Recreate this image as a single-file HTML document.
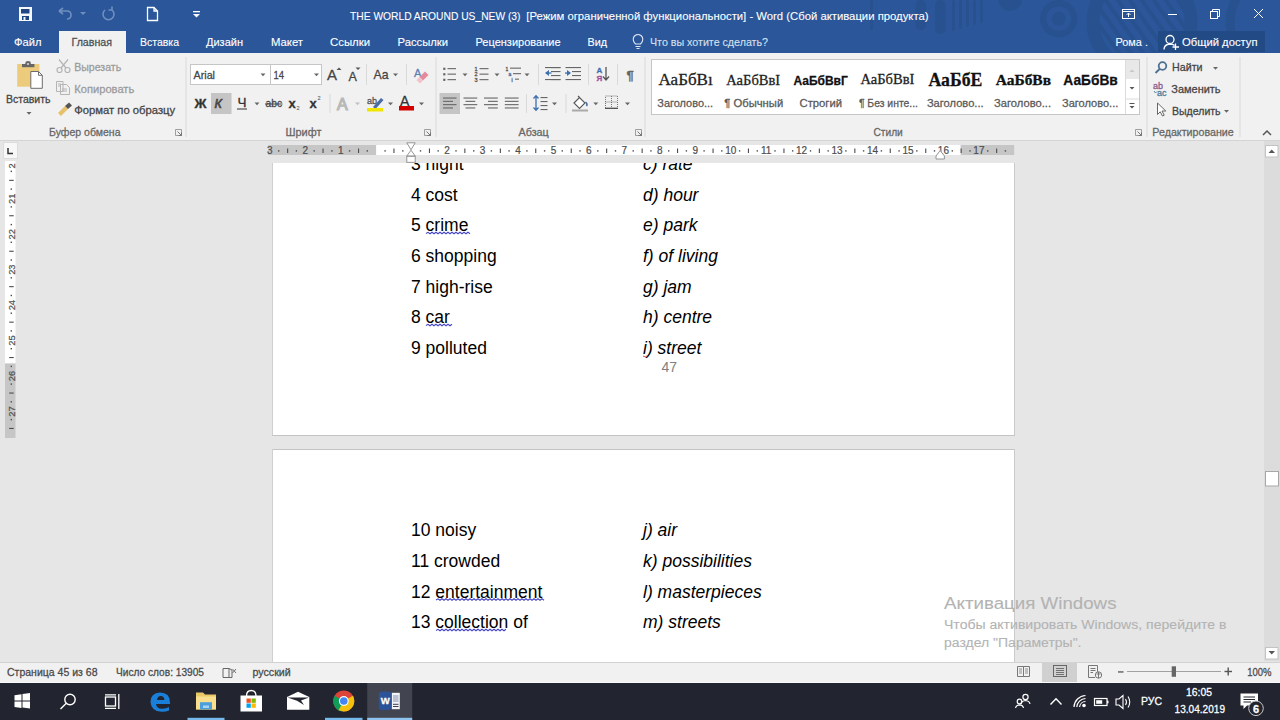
<!DOCTYPE html>
<html><head><meta charset="utf-8"><title>Word</title>
<style>
*{margin:0;padding:0}
html,body{width:1280px;height:720px;overflow:hidden;background:#e6e6e6;font-family:"Liberation Sans",sans-serif}
svg{position:absolute;left:0;top:0;display:block}
</style></head><body>
<svg width="1280" height="720" viewBox="0 0 1280 720">
<defs><clipPath id="vrclip" clipPathUnits="userSpaceOnUse"><rect x="0" y="163" width="40" height="300"/></clipPath><clipPath id="docclip"><rect x="0" y="163" width="1280" height="300"/></clipPath></defs>
<rect x="0" y="0" width="1280" height="720" fill="#e6e6e6" />
<rect x="1264" y="141" width="16" height="520" fill="#dedede" />
<rect x="273" y="100" width="741" height="335" fill="#ffffff" />
<rect x="272" y="100" width="1" height="336" fill="#d0d0d0" />
<rect x="1014" y="100" width="1" height="336" fill="#cacaca" />
<rect x="272" y="435" width="743" height="1" fill="#c4c4c4" />
<rect x="273" y="450" width="741" height="300" fill="#ffffff" />
<rect x="272" y="449" width="743" height="1" fill="#c4c4c4" />
<rect x="272" y="449" width="1" height="300" fill="#d0d0d0" />
<rect x="1014" y="449" width="1" height="300" fill="#cacaca" />
<g clip-path="url(#docclip)">
<text x="411" y="169.9" font-size="17.5" fill="#000" font-weight="normal" font-family="Liberation Sans" font-style="normal" text-anchor="start"  >3 night</text>
<text x="643" y="169.9" font-size="17.5" fill="#000" font-weight="normal" font-family="Liberation Sans" font-style="italic" text-anchor="start"  >c) rate</text>
<text x="411" y="200.6" font-size="17.5" fill="#000" font-weight="normal" font-family="Liberation Sans" font-style="normal" text-anchor="start"  >4 cost</text>
<text x="643" y="200.6" font-size="17.5" fill="#000" font-weight="normal" font-family="Liberation Sans" font-style="italic" text-anchor="start"  >d) hour</text>
<text x="411" y="231.3" font-size="17.5" fill="#000" font-weight="normal" font-family="Liberation Sans" font-style="normal" text-anchor="start"  >5 crime</text>
<text x="643" y="231.3" font-size="17.5" fill="#000" font-weight="normal" font-family="Liberation Sans" font-style="italic" text-anchor="start"  >e) park</text>
<text x="411" y="262.0" font-size="17.5" fill="#000" font-weight="normal" font-family="Liberation Sans" font-style="normal" text-anchor="start"  >6 shopping</text>
<text x="643" y="262.0" font-size="17.5" fill="#000" font-weight="normal" font-family="Liberation Sans" font-style="italic" text-anchor="start"  >f) of living</text>
<text x="411" y="292.7" font-size="17.5" fill="#000" font-weight="normal" font-family="Liberation Sans" font-style="normal" text-anchor="start"  >7 high-rise</text>
<text x="643" y="292.7" font-size="17.5" fill="#000" font-weight="normal" font-family="Liberation Sans" font-style="italic" text-anchor="start"  >g) jam</text>
<text x="411" y="323.4" font-size="17.5" fill="#000" font-weight="normal" font-family="Liberation Sans" font-style="normal" text-anchor="start"  >8 car</text>
<text x="643" y="323.4" font-size="17.5" fill="#000" font-weight="normal" font-family="Liberation Sans" font-style="italic" text-anchor="start"  >h) centre</text>
<text x="411" y="354.1" font-size="17.5" fill="#000" font-weight="normal" font-family="Liberation Sans" font-style="normal" text-anchor="start"  >9 polluted</text>
<text x="643" y="354.1" font-size="17.5" fill="#000" font-weight="normal" font-family="Liberation Sans" font-style="italic" text-anchor="start"  >i) street</text>
</g>
<text x="411" y="536.2" font-size="17.5" fill="#000" font-weight="normal" font-family="Liberation Sans" font-style="normal" text-anchor="start"  >10 noisy</text>
<text x="643" y="536.2" font-size="17.5" fill="#000" font-weight="normal" font-family="Liberation Sans" font-style="italic" text-anchor="start"  >j) air</text>
<text x="411" y="566.9" font-size="17.5" fill="#000" font-weight="normal" font-family="Liberation Sans" font-style="normal" text-anchor="start"  >11 crowded</text>
<text x="643" y="566.9" font-size="17.5" fill="#000" font-weight="normal" font-family="Liberation Sans" font-style="italic" text-anchor="start"  >k) possibilities</text>
<text x="411" y="597.6" font-size="17.5" fill="#000" font-weight="normal" font-family="Liberation Sans" font-style="normal" text-anchor="start"  >12 entertainment</text>
<text x="643" y="597.6" font-size="17.5" fill="#000" font-weight="normal" font-family="Liberation Sans" font-style="italic" text-anchor="start"  >l) masterpieces</text>
<text x="411" y="628.3" font-size="17.5" fill="#000" font-weight="normal" font-family="Liberation Sans" font-style="normal" text-anchor="start"  >13 collection of</text>
<text x="643" y="628.3" font-size="17.5" fill="#000" font-weight="normal" font-family="Liberation Sans" font-style="italic" text-anchor="start"  >m) streets</text>
<text x="661.5" y="372" font-size="14" fill="#808080" font-weight="normal" font-family="Liberation Sans" font-style="normal" text-anchor="start"  >47</text>
<path d="M426,233.5 L428,232.3 L430,233.8 L432,232.3 L434,233.8 L436,232.3 L438,233.8 L440,232.3 L442,233.8 L444,232.3 L446,233.8 L448,232.3 L450,233.8 L452,232.3 L454,233.8 L456,232.3 L458,233.8 L460,232.3 L462,233.8 L464,232.3 L466,233.8 L468,232.3 L470,233.8" fill="none" stroke="#4646c8" stroke-width="1.1"/>
<path d="M426,325.5 L428,324.3 L430,325.8 L432,324.3 L434,325.8 L436,324.3 L438,325.8 L440,324.3 L442,325.8 L444,324.3 L446,325.8 L448,324.3 L450,325.8 L452,324.3" fill="none" stroke="#4646c8" stroke-width="1.1"/>
<path d="M436,600 L438,598.8 L440,600.3 L442,598.8 L444,600.3 L446,598.8 L448,600.3 L450,598.8 L452,600.3 L454,598.8 L456,600.3 L458,598.8 L460,600.3 L462,598.8 L464,600.3 L466,598.8 L468,600.3 L470,598.8 L472,600.3 L474,598.8 L476,600.3 L478,598.8 L480,600.3 L482,598.8 L484,600.3 L486,598.8 L488,600.3 L490,598.8 L492,600.3 L494,598.8 L496,600.3 L498,598.8 L500,600.3 L502,598.8 L504,600.3 L506,598.8 L508,600.3 L510,598.8 L512,600.3 L514,598.8 L516,600.3 L518,598.8 L520,600.3 L522,598.8 L524,600.3 L526,598.8 L528,600.3 L530,598.8 L532,600.3 L534,598.8 L536,600.3 L538,598.8 L540,600.3 L542,598.8 L544,600.3" fill="none" stroke="#4646c8" stroke-width="1.1"/>
<path d="M436,630.5 L438,629.3 L440,630.8 L442,629.3 L444,630.8 L446,629.3 L448,630.8 L450,629.3 L452,630.8 L454,629.3 L456,630.8 L458,629.3 L460,630.8 L462,629.3 L464,630.8 L466,629.3 L468,630.8 L470,629.3 L472,630.8 L474,629.3 L476,630.8 L478,629.3 L480,630.8 L482,629.3 L484,630.8 L486,629.3 L488,630.8 L490,629.3 L492,630.8 L494,629.3 L496,630.8 L498,629.3 L500,630.8 L502,629.3 L504,630.8 L506,629.3" fill="none" stroke="#4646c8" stroke-width="1.1"/>
<path d="M643,356 Q645,358 648,355.5" fill="none" stroke="#d04040" stroke-width="0.9"/>
<rect x="0" y="0" width="1280" height="53" fill="#2b579a" />
<g fill="#28518f">
<rect x="870" y="0" width="3" height="30"/>
<rect x="915.5" y="0" width="10.5" height="30" rx="5"/>
<rect x="935" y="0" width="10.5" height="34" rx="5"/>
<rect x="952" y="0" width="3" height="31" rx="1.5"/>
<rect x="959" y="0" width="3" height="29" rx="1.5"/>
<rect x="966" y="0" width="3" height="27" rx="1.5"/>
<rect x="973" y="0" width="3" height="25" rx="1.5"/>
<rect x="980" y="0" width="3" height="23" rx="1.5"/>
<circle cx="1010" cy="-1" r="12"/>
</g>
<g fill="none" stroke="#28518f">
<circle cx="1058.7" cy="18.7" r="15.5" stroke-width="6.5"/>
<circle cx="1058.7" cy="18.7" r="3.5" stroke-width="7" />
<circle cx="1142" cy="22" r="49" stroke-width="13"/>
<circle cx="1275" cy="22" r="45" stroke-width="9"/>
</g>
<clipPath id="cc1"><circle cx="1142" cy="22" r="43"/></clipPath>
<g clip-path="url(#cc1)" stroke="#28518f" stroke-width="4">
<line x1="1028" y1="-25" x2="1088" y2="60"/>
<line x1="1040" y1="-25" x2="1100" y2="60"/>
<line x1="1052" y1="-25" x2="1112" y2="60"/>
<line x1="1064" y1="-25" x2="1124" y2="60"/>
<line x1="1076" y1="-25" x2="1136" y2="60"/>
<line x1="1088" y1="-25" x2="1148" y2="60"/>
<line x1="1100" y1="-25" x2="1160" y2="60"/>
<line x1="1112" y1="-25" x2="1172" y2="60"/>
<line x1="1124" y1="-25" x2="1184" y2="60"/>
<line x1="1136" y1="-25" x2="1196" y2="60"/>
<line x1="1148" y1="-25" x2="1208" y2="60"/>
<line x1="1160" y1="-25" x2="1220" y2="60"/>
<line x1="1172" y1="-25" x2="1232" y2="60"/>
<line x1="1184" y1="-25" x2="1244" y2="60"/>
</g>
<rect x="1158" y="31" width="107" height="21" fill="#224a85" />
<rect x="59" y="31" width="67" height="22" fill="#f1f1f1" />
<rect x="0" y="53" width="1280" height="87" fill="#f1f1f1" />
<rect x="0" y="140" width="1280" height="1" fill="#d4d4d4" />
<rect x="0" y="141" width="1264" height="22" fill="#e6e6e6" />
<rect x="19" y="7" width="13" height="14" fill="#f4f8fd" />
<rect x="21" y="9" width="8.5" height="4.5" fill="#1f4681" />
<rect x="22" y="16" width="7" height="4" fill="#1f4681" />
<rect x="23.5" y="17" width="2" height="3" fill="#f4f8fd" />
<g fill="none" stroke="#6f8fbf" stroke-width="1.6"><path d="M59,11 L63,8 M59,11 L63,14 M59,11 H67 Q71,11 71,15 Q71,19 67,19"/></g>
<path d="M80,12 H86 L83,15 Z" fill="#6f8fbf"/>
<g fill="none" stroke="#6f8fbf" stroke-width="1.6"><path d="M112,10 A5.5,5.5 0 1 1 105,10 M112,10 V6.5 M112,10 H108.5"/></g>
<path d="M147.5,7.5 H154 L157.5,11 V20.5 H147.5 Z M154,7.5 V11 H157.5" fill="none" stroke="#fff" stroke-width="1.3"/>
<rect x="193" y="11" width="7" height="1.3" fill="#fff" />
<path d="M193,14 H200 L196.5,17.5 Z" fill="#fff"/>
<text x="350" y="20" font-size="11.8" fill="#fff" font-weight="normal" font-family="Liberation Sans" font-style="normal" textLength="170.5" lengthAdjust="spacingAndGlyphs" stroke="#fff" stroke-width="0.1" >THE WORLD AROUND US_NEW (3)</text>
<text x="526.3" y="20" font-size="11.8" fill="#fff" font-weight="normal" font-family="Liberation Sans" font-style="normal" textLength="402.2" lengthAdjust="spacingAndGlyphs" stroke="#fff" stroke-width="0.1" >[Режим ограниченной функциональности] - Word (Сбой активации продукта)</text>
<g fill="none" stroke="#fff" stroke-width="1">
<rect x="1122.5" y="9.5" width="12" height="9"/><path d="M1122.5,11.5 H1134.5 M1128.5,17 V13 M1126.5,15 L1128.5,13 L1130.5,15"/>
<path d="M1168,14.5 H1177"/>
<rect x="1210.5" y="11.5" width="7" height="7"/><path d="M1212.5,11.5 V9.5 H1219.5 V16.5 H1217.5"/>
<path d="M1254,9 L1263,18 M1263,9 L1254,18"/>
</g>
<text x="14" y="46.0" font-size="11.8" fill="#ffffff" font-weight="normal" font-family="Liberation Sans" font-style="normal" textLength="27.5" lengthAdjust="spacingAndGlyphs" stroke="#ffffff" stroke-width="0.12" >Файл</text>
<text x="71.5" y="46.0" font-size="11.8" fill="#4a4f58" font-weight="normal" font-family="Liberation Sans" font-style="normal" textLength="40.5" lengthAdjust="spacingAndGlyphs" stroke="#4a4f58" stroke-width="0.28" >Главная</text>
<text x="140" y="46.0" font-size="11.8" fill="#ffffff" font-weight="normal" font-family="Liberation Sans" font-style="normal" textLength="39.0" lengthAdjust="spacingAndGlyphs" stroke="#ffffff" stroke-width="0.12" >Вставка</text>
<text x="206" y="46.0" font-size="11.8" fill="#ffffff" font-weight="normal" font-family="Liberation Sans" font-style="normal" textLength="37.0" lengthAdjust="spacingAndGlyphs" stroke="#ffffff" stroke-width="0.12" >Дизайн</text>
<text x="271" y="46.0" font-size="11.8" fill="#ffffff" font-weight="normal" font-family="Liberation Sans" font-style="normal" textLength="32.0" lengthAdjust="spacingAndGlyphs" stroke="#ffffff" stroke-width="0.12" >Макет</text>
<text x="330" y="46.0" font-size="11.8" fill="#ffffff" font-weight="normal" font-family="Liberation Sans" font-style="normal" textLength="40.0" lengthAdjust="spacingAndGlyphs" stroke="#ffffff" stroke-width="0.12" >Ссылки</text>
<text x="397.5" y="46.0" font-size="11.8" fill="#ffffff" font-weight="normal" font-family="Liberation Sans" font-style="normal" textLength="50.5" lengthAdjust="spacingAndGlyphs" stroke="#ffffff" stroke-width="0.12" >Рассылки</text>
<text x="475.5" y="46.0" font-size="11.8" fill="#ffffff" font-weight="normal" font-family="Liberation Sans" font-style="normal" textLength="85.0" lengthAdjust="spacingAndGlyphs" stroke="#ffffff" stroke-width="0.12" >Рецензирование</text>
<text x="587.5" y="46.0" font-size="11.8" fill="#ffffff" font-weight="normal" font-family="Liberation Sans" font-style="normal" textLength="19.5" lengthAdjust="spacingAndGlyphs" stroke="#ffffff" stroke-width="0.12" >Вид</text>
<g fill="none" stroke="#dfe7f2" stroke-width="1.1"><path d="M635.5,44 Q632.5,41 633.5,37.5 Q635,34.5 638,34.5 Q641,34.5 642.5,37.5 Q643.5,41 640.5,44 Z M635.5,46.5 H640.5 M636.5,48.5 H639.5"/></g>
<text x="650" y="46.0" font-size="11.8" fill="#d7e1ee" font-weight="normal" font-family="Liberation Sans" font-style="normal" textLength="118.0" lengthAdjust="spacingAndGlyphs" stroke="#d7e1ee" stroke-width="0.1" >Что вы хотите сделать?</text>
<text x="1115.5" y="46.2" font-size="11.8" fill="#fff" font-weight="normal" font-family="Liberation Sans" font-style="normal" textLength="32.5" lengthAdjust="spacingAndGlyphs" stroke="#fff" stroke-width="0.12" >Рома .</text>
<g fill="none" stroke="#fff" stroke-width="1.3"><circle cx="1170" cy="39.5" r="4"/><path d="M1164,49.5 Q1164,44.5 1170,44 Q1173,44 1174.5,45.5 M1175.5,43.5 V50 M1172.5,47 H1179"/></g>
<text x="1182" y="46.2" font-size="11.8" fill="#fff" font-weight="normal" font-family="Liberation Sans" font-style="normal" textLength="75.5" lengthAdjust="spacingAndGlyphs" stroke="#fff" stroke-width="0.12" >Общий доступ</text>
<rect x="185.5" y="57" width="1" height="80" fill="#dadada" />
<rect x="435.5" y="57" width="1" height="80" fill="#dadada" />
<rect x="644.5" y="57" width="1" height="80" fill="#dadada" />
<rect x="1146.5" y="57" width="1" height="80" fill="#dadada" />
<rect x="1239.5" y="57" width="1" height="80" fill="#dadada" />
<path d="M17.2,64 H39.4 V86.7 H17.2 Z" fill="#eccb7c"/>
<path d="M22,64 H34.4 V67.2 H22 Z" fill="#666"/><path d="M25.3,64.5 V63 Q25.3,61 28,61 Q30.8,61 30.8,63 V64.5 Z" fill="#666"/><circle cx="28" cy="64" r="1" fill="#ddd"/>
<path d="M30.8,71.5 H38.5 L42.3,75.3 V88.3 H30.8 Z" fill="#fff" stroke="#6d6d6d" stroke-width="1"/><path d="M38.5,71.5 V75.3 H42.3" fill="none" stroke="#6d6d6d" stroke-width="1"/>
<text x="6" y="103" font-size="11.2" fill="#444444" font-weight="normal" font-family="Liberation Sans" font-style="normal" textLength="44.5" lengthAdjust="spacingAndGlyphs" stroke="#444444" stroke-width="0.28" >Вставить</text>
<path d="M26.5,112 H31.5 L29,114.8 Z" fill="#666"/>
<g fill="none" stroke="#b4b4b4" stroke-width="1.2"><circle cx="59.5" cy="70" r="2.5"/><circle cx="67.5" cy="70" r="2.5"/><path d="M61,68 L68,59.5 M66,68 L59,59.5"/></g>
<text x="74.2" y="71.3" font-size="11.2" fill="#9b9b9b" font-weight="normal" font-family="Liberation Sans" font-style="normal" textLength="47.0" lengthAdjust="spacingAndGlyphs" stroke="#9b9b9b" stroke-width="0.28" >Вырезать</text>
<g fill="none" stroke="#b4b4b4" stroke-width="1"><path d="M56.5,81.5 H63 V91.5 H56.5 Z M60.5,84.5 H66.5 L69.5,87.5 V94.5 H60.5 Z M58,84 H61 M58,86 H60 M62,89 H67 M62,91 H67"/></g>
<text x="74.2" y="92.8" font-size="11.2" fill="#9b9b9b" font-weight="normal" font-family="Liberation Sans" font-style="normal" textLength="60.1" lengthAdjust="spacingAndGlyphs" stroke="#9b9b9b" stroke-width="0.28" >Копировать</text>
<path d="M58,113 L65,106 L68,109 L61,116 Z" fill="#e7c06b"/><path d="M65,106 L69,102.5 L72,105.5 L68,109 Z" fill="#555"/>
<text x="74.2" y="114.3" font-size="11.2" fill="#444444" font-weight="normal" font-family="Liberation Sans" font-style="normal" textLength="101.0" lengthAdjust="spacingAndGlyphs" stroke="#444444" stroke-width="0.28" >Формат по образцу</text>
<text x="49" y="135.9" font-size="11.2" fill="#666666" font-weight="normal" font-family="Liberation Sans" font-style="normal" textLength="71.5" lengthAdjust="spacingAndGlyphs" stroke="#666666" stroke-width="0.28" >Буфер обмена</text>
<path d="M175.5,129.5 H181.5 V135.5 H175.5 Z" fill="none" stroke="#8a8a8a" stroke-width="0.8"/><path d="M177.5,131.5 L181.5,135.5 M181.5,132.5 V135.5 H178.5" fill="none" stroke="#777" stroke-width="1"/>
<rect x="190.5" y="64.5" width="80" height="20" fill="#fff" stroke="#c6c6c6"/>
<rect x="270.5" y="64.5" width="51" height="20" fill="#fff" stroke="#c6c6c6"/>
<text x="193.5" y="79" font-size="11.2" fill="#444444" font-weight="normal" font-family="Liberation Sans" font-style="normal" textLength="21.5" lengthAdjust="spacingAndGlyphs" stroke="#444444" stroke-width="0.28" >Arial</text>
<text x="273.5" y="79" font-size="11.2" fill="#444444" font-weight="normal" font-family="Liberation Sans" font-style="normal" textLength="10.5" lengthAdjust="spacingAndGlyphs" stroke="#444444" stroke-width="0.28" >14</text>
<path d="M260.5,73.5 H265.5 L263.0,76.3 Z" fill="#666"/>
<path d="M314,73.5 H319 L316.5,76.3 Z" fill="#666"/>
<text x="327" y="80" font-size="15" fill="#444444" font-weight="normal" font-family="Liberation Sans" font-style="normal" text-anchor="start" stroke="#444444" stroke-width="0.3" >A</text>
<path d="M336.5,70 L339,67.5 L341.5,70 Z" fill="#555"/>
<text x="348.5" y="80.5" font-size="12.5" fill="#444444" font-weight="normal" font-family="Liberation Sans" font-style="normal" text-anchor="start" stroke="#444444" stroke-width="0.3" >A</text>
<path d="M355.5,67.5 H360.5 L358,70 Z" fill="#555"/>
<rect x="366" y="64" width="1" height="21" fill="#dadada" />
<text x="373.5" y="78.8" font-size="13.5" fill="#444444" font-weight="normal" font-family="Liberation Sans" font-style="normal" textLength="15.0" lengthAdjust="spacingAndGlyphs" stroke="#444444" stroke-width="0.28" >Aa</text>
<path d="M393,73.5 H398 L395.5,76.3 Z" fill="#666"/>
<rect x="406" y="64" width="1" height="21" fill="#dadada" />
<text x="414" y="77" font-size="11" fill="#5b7fb5" font-weight="normal" font-family="Liberation Sans" font-style="normal" text-anchor="start" stroke="#5b7fb5" stroke-width="0.3" >A</text>
<path d="M419.5,77 L425,71.5 L428.5,75 L423,80.5 Z" fill="#e58a9b"/><path d="M416.5,80 L419.5,77 L423,80.5 L420,83.5 Z" fill="#f2c2cb"/>
<text x="194.5" y="107.5" font-size="12.5" fill="#333" font-weight="bold" font-family="Liberation Sans" font-style="normal" textLength="12.0" lengthAdjust="spacingAndGlyphs" stroke="#333" stroke-width="0.28" >Ж</text>
<rect x="211" y="93" width="20.5" height="21" fill="#c5c5c5" />
<text x="214.5" y="107.5" font-size="12.5" fill="#484848" font-weight="normal" font-family="Liberation Sans" font-style="italic" text-anchor="start" stroke="#484848" stroke-width="0.7" >К</text>
<text x="237.5" y="107" font-size="12" fill="#333" font-weight="normal" font-family="Liberation Sans" font-style="normal" textLength="9.0" lengthAdjust="spacingAndGlyphs" stroke="#333" stroke-width="0.28" >Ч</text>
<rect x="237" y="108.5" width="10" height="1" fill="#333" />
<path d="M254.5,102.5 H259.5 L257.0,105.3 Z" fill="#666"/>
<text x="265.5" y="107" font-size="11.5" fill="#444" font-weight="normal" font-family="Liberation Sans" font-style="normal" textLength="16.5" lengthAdjust="spacingAndGlyphs" stroke="#444" stroke-width="0.28" >abc</text>
<rect x="265" y="103.5" width="17.5" height="1" fill="#444" />
<text x="288.5" y="107.5" font-size="13" fill="#333" font-weight="bold" font-family="Liberation Sans" font-style="normal" text-anchor="start" stroke="#333" stroke-width="0.3" >x</text>
<text x="296.5" y="110" font-size="5.5" fill="#666" font-weight="normal" font-family="Liberation Sans" font-style="normal" text-anchor="start" stroke="#666" stroke-width="0.1" >2</text>
<text x="309.5" y="107.5" font-size="13" fill="#333" font-weight="bold" font-family="Liberation Sans" font-style="normal" text-anchor="start" stroke="#333" stroke-width="0.3" >x</text>
<text x="317.5" y="100" font-size="5.5" fill="#666" font-weight="normal" font-family="Liberation Sans" font-style="normal" text-anchor="start" stroke="#666" stroke-width="0.1" >2</text>
<rect x="329.5" y="94" width="1" height="19" fill="#dadada" />
<text x="337" y="110" font-size="16" fill="#f1f1f1" font-weight="normal" font-family="Liberation Sans" font-style="normal" text-anchor="start"  stroke="#b8b8b8" stroke-width="1.2">A</text>
<path d="M355,102.5 H360 L357.5,105.3 Z" fill="#c0c0c0"/>
<text x="367" y="103.5" font-size="9" fill="#555" font-weight="normal" font-family="Liberation Sans" font-style="normal" text-anchor="start" stroke="#555" stroke-width="0.3" >ab</text>
<path d="M373,107 L381,98 L383.5,100 L375.5,109 Z" fill="#4a6da3"/>
<rect x="367" y="108" width="16" height="3.5" fill="#f2e600" />
<path d="M388,102.5 H393 L390.5,105.3 Z" fill="#666"/>
<text x="400" y="106" font-size="14" fill="#333" font-weight="normal" font-family="Liberation Sans" font-style="normal" text-anchor="start" stroke="#333" stroke-width="0.3" >A</text>
<rect x="399" y="106" width="15" height="4.5" fill="#d40000" />
<path d="M419,102.5 H424 L421.5,105.3 Z" fill="#666"/>
<text x="285.5" y="136" font-size="11.2" fill="#666666" font-weight="normal" font-family="Liberation Sans" font-style="normal" textLength="36.0" lengthAdjust="spacingAndGlyphs" stroke="#666666" stroke-width="0.28" >Шрифт</text>
<path d="M424.5,129.5 H430.5 V135.5 H424.5 Z" fill="none" stroke="#8a8a8a" stroke-width="0.8"/><path d="M426.5,131.5 L430.5,135.5 M430.5,132.5 V135.5 H427.5" fill="none" stroke="#777" stroke-width="1"/>
<rect x="443.2" y="67.7" width="2.2" height="2.2" fill="#666" />
<rect x="447.5" y="68.1" width="8.5" height="1.1" fill="#666666" />
<rect x="443.2" y="73.2" width="2.2" height="2.2" fill="#666" />
<rect x="447.5" y="73.6" width="8.5" height="1.1" fill="#666666" />
<rect x="443.2" y="78.7" width="2.2" height="2.2" fill="#666" />
<rect x="447.5" y="79.1" width="8.5" height="1.1" fill="#666666" />
<path d="M462.5,73.5 H467.5 L465.0,76.3 Z" fill="#666"/>
<text x="474.5" y="70.7" font-size="5.5" fill="#555" font-weight="normal" font-family="Liberation Sans" font-style="normal" text-anchor="start" stroke="#555" stroke-width="0.3" >1</text>
<rect x="479.5" y="68.1" width="9" height="1.1" fill="#666666" />
<text x="474.5" y="76.2" font-size="5.5" fill="#555" font-weight="normal" font-family="Liberation Sans" font-style="normal" text-anchor="start" stroke="#555" stroke-width="0.3" >2</text>
<rect x="479.5" y="73.6" width="9" height="1.1" fill="#666666" />
<text x="474.5" y="81.7" font-size="5.5" fill="#555" font-weight="normal" font-family="Liberation Sans" font-style="normal" text-anchor="start" stroke="#555" stroke-width="0.3" >3</text>
<rect x="479.5" y="79.1" width="9" height="1.1" fill="#666666" />
<path d="M494.5,73.5 H499.5 L497.0,76.3 Z" fill="#666"/>
<text x="505.5" y="70.5" font-size="5" fill="#555" font-weight="normal" font-family="Liberation Sans" font-style="normal" text-anchor="start" stroke="#555" stroke-width="0.3" >1</text>
<rect x="510" y="67.6" width="11" height="1.1" fill="#666666" />
<text x="508.5" y="76" font-size="5" fill="#4a6da3" font-weight="normal" font-family="Liberation Sans" font-style="normal" text-anchor="start" stroke="#4a6da3" stroke-width="0.3" >a</text>
<rect x="513" y="73.1" width="8" height="1.1" fill="#666666" />
<text x="511.5" y="81.5" font-size="5" fill="#555" font-weight="normal" font-family="Liberation Sans" font-style="normal" text-anchor="start" stroke="#555" stroke-width="0.3" >i</text>
<rect x="515" y="78.6" width="4" height="1.1" fill="#666666" />
<path d="M524.5,73.5 H529.5 L527.0,76.3 Z" fill="#666"/>
<rect x="538" y="64" width="1" height="21" fill="#dadada" />
<rect x="551" y="67" width="9.5" height="1.1" fill="#666666" />
<rect x="551" y="71" width="9.5" height="1.1" fill="#666666" />
<rect x="551" y="75" width="9.5" height="1.1" fill="#666666" />
<rect x="551" y="79" width="9.5" height="1.1" fill="#666666" />
<rect x="545" y="67" width="15.5" height="1.1" fill="#666666" />
<rect x="545" y="79" width="15.5" height="1.1" fill="#666666" />
<path d="M545,73 L549,70 V76 Z" fill="#3d6fb0"/><rect x="548" y="72.4" width="3.5" height="1.3" fill="#3d6fb0"/>
<rect x="572" y="71" width="9" height="1.1" fill="#666666" />
<rect x="572" y="75" width="9" height="1.1" fill="#666666" />
<rect x="565.5" y="67" width="15.5" height="1.1" fill="#666666" />
<rect x="565.5" y="79" width="15.5" height="1.1" fill="#666666" />
<path d="M571,73 L567,70 V76 Z" fill="#3d6fb0"/><rect x="565" y="72.4" width="3" height="1.3" fill="#3d6fb0"/>
<rect x="588" y="64" width="1" height="21" fill="#dadada" />
<text x="596.5" y="73" font-size="8" fill="#3d6fb0" font-weight="bold" font-family="Liberation Sans" font-style="normal" text-anchor="start" stroke="#3d6fb0" stroke-width="0.3" >А</text>
<text x="596.5" y="81" font-size="8" fill="#a24fa0" font-weight="bold" font-family="Liberation Sans" font-style="normal" text-anchor="start" stroke="#a24fa0" stroke-width="0.3" >Я</text>
<path d="M606,67 V79.5 M603,76.5 L606,80 L609,76.5" fill="none" stroke="#555" stroke-width="1.3"/>
<rect x="617" y="64" width="1" height="21" fill="#dadada" />
<text x="626.5" y="79.5" font-size="13" fill="#666" font-weight="bold" font-family="Liberation Sans" font-style="normal" text-anchor="start" stroke="#666" stroke-width="0.3" >¶</text>
<rect x="439.5" y="93" width="20.5" height="21" fill="#c5c5c5" />
<rect x="443" y="97.5" width="13.5" height="1.1" fill="#666666" />
<rect x="443" y="100.8" width="10" height="1.1" fill="#666666" />
<rect x="443" y="104.1" width="13.5" height="1.1" fill="#666666" />
<rect x="443" y="107.4" width="10" height="1.1" fill="#666666" />
<rect x="463.5" y="97.5" width="13.8" height="1.1" fill="#666666" />
<rect x="465.5" y="100.8" width="9.8" height="1.1" fill="#666666" />
<rect x="463.5" y="104.1" width="13.8" height="1.1" fill="#666666" />
<rect x="465.5" y="107.4" width="9.8" height="1.1" fill="#666666" />
<rect x="484" y="97.5" width="13.8" height="1.1" fill="#666666" />
<rect x="488" y="100.8" width="9.8" height="1.1" fill="#666666" />
<rect x="484" y="104.1" width="13.8" height="1.1" fill="#666666" />
<rect x="488" y="107.4" width="9.8" height="1.1" fill="#666666" />
<rect x="504.8" y="97.5" width="13.8" height="1.1" fill="#666666" />
<rect x="504.8" y="100.8" width="13.8" height="1.1" fill="#666666" />
<rect x="504.8" y="104.1" width="13.8" height="1.1" fill="#666666" />
<rect x="504.8" y="107.4" width="13.8" height="1.1" fill="#666666" />
<rect x="526" y="94" width="1" height="19" fill="#dadada" />
<path d="M536,96 V110 M533.5,98.5 L536,95.8 L538.5,98.5 M533.5,107.5 L536,110.2 L538.5,107.5" fill="none" stroke="#3d6fb0" stroke-width="1.3"/>
<rect x="540.5" y="97" width="7" height="1.1" fill="#666666" />
<rect x="540.5" y="101" width="7" height="1.1" fill="#666666" />
<rect x="540.5" y="105" width="7" height="1.1" fill="#666666" />
<rect x="540.5" y="109" width="7" height="1.1" fill="#666666" />
<path d="M552,102.5 H557 L554.5,105.3 Z" fill="#666"/>
<rect x="565.5" y="94" width="1" height="19" fill="#dadada" />
<path d="M574,103 L579.5,97.5 L585,103 L579.5,108.5 Z" fill="#fff" stroke="#555" stroke-width="1.1"/><path d="M578,96 L579.5,97.5" stroke="#555" stroke-width="1.1"/><path d="M585.5,102 Q588,104 586.5,106" fill="none" stroke="#4a6da3" stroke-width="1.5"/>
<rect x="572" y="109.5" width="16" height="2" fill="#aaa" />
<path d="M593.3,102.5 H598.3 L595.8,105.3 Z" fill="#666"/>
<g fill="none" stroke="#777" stroke-width="1" stroke-dasharray="1,1"><rect x="605.5" y="96" width="12" height="12"/><path d="M611.5,96 V108 M605.5,102 H617.5"/></g>
<rect x="605" y="107.8" width="13" height="1.2" fill="#555" />
<path d="M625,102.5 H630 L627.5,105.3 Z" fill="#666"/>
<text x="518.5" y="136.2" font-size="11.2" fill="#666666" font-weight="normal" font-family="Liberation Sans" font-style="normal" textLength="30.3" lengthAdjust="spacingAndGlyphs" stroke="#666666" stroke-width="0.28" >Абзац</text>
<path d="M635.5,129.5 H641.5 V135.5 H635.5 Z" fill="none" stroke="#8a8a8a" stroke-width="0.8"/><path d="M637.5,131.5 L641.5,135.5 M641.5,132.5 V135.5 H638.5" fill="none" stroke="#777" stroke-width="1"/>
<rect x="651.5" y="59.5" width="488" height="55" fill="#fff" stroke="#c6c6c6"/>
<rect x="1125.5" y="60" width="13.5" height="54" fill="#fff" />
<path d="M1125.5,60 V114" stroke="#dcdcdc"/>
<rect x="1126" y="60" width="13" height="19" fill="#e8e8e8" />
<path d="M1129.5,72 L1132,69.5 L1134.5,72 Z" fill="#c6c6c6"/>
<path d="M1129.5,87 H1134.5 L1132,89.5 Z" fill="#555"/>
<rect x="1126" y="98.5" width="13" height="1" fill="#dcdcdc" />
<rect x="1129.5" y="103" width="5" height="1" fill="#555" />
<path d="M1129.5,106 H1134.5 L1132,108.5 Z" fill="#555"/>
<text x="658.5" y="84.5" font-size="16" fill="#222" font-weight="normal" font-family="Liberation Serif" font-style="normal" textLength="54.2" lengthAdjust="spacingAndGlyphs" stroke="#222" stroke-width="0.28" >АаБбВı</text>
<text x="726.3" y="84.5" font-size="14" fill="#222" font-weight="normal" font-family="Liberation Serif" font-style="normal" textLength="53.9" lengthAdjust="spacingAndGlyphs" stroke="#222" stroke-width="0.28" >АаБбВвI</text>
<text x="793.4" y="84.5" font-size="13" fill="#111" font-weight="bold" font-family="Liberation Sans" font-style="normal" textLength="54.4" lengthAdjust="spacingAndGlyphs" stroke="#111" stroke-width="0.28" >АаБбВвГ</text>
<text x="860.5" y="83.8" font-size="14" fill="#222" font-weight="normal" font-family="Liberation Serif" font-style="normal" textLength="53.9" lengthAdjust="spacingAndGlyphs" stroke="#222" stroke-width="0.28" >АаБбВвI</text>
<text x="928.5" y="86" font-size="19" fill="#111" font-weight="bold" font-family="Liberation Serif" font-style="normal" textLength="53.9" lengthAdjust="spacingAndGlyphs" stroke="#111" stroke-width="0.28" >АаБбЕ</text>
<text x="995.8" y="84.8" font-size="14.5" fill="#111" font-weight="bold" font-family="Liberation Serif" font-style="normal" textLength="55.2" lengthAdjust="spacingAndGlyphs" stroke="#111" stroke-width="0.28" >АаБбВв</text>
<text x="1063.3" y="84.8" font-size="15" fill="#111" font-weight="bold" font-family="Liberation Sans" font-style="normal" textLength="54.5" lengthAdjust="spacingAndGlyphs" stroke="#111" stroke-width="0.28" >АаБбВв</text>
<text x="657.3" y="107.3" font-size="11.2" fill="#595959" font-weight="normal" font-family="Liberation Sans" font-style="normal" textLength="55.8" lengthAdjust="spacingAndGlyphs" stroke="#595959" stroke-width="0.28" >Заголово...</text>
<text x="724.3" y="107.3" font-size="11.2" fill="#595959" font-weight="normal" font-family="Liberation Sans" font-style="normal" textLength="58.9" lengthAdjust="spacingAndGlyphs" stroke="#595959" stroke-width="0.28" >¶ Обычный</text>
<text x="799.5" y="107.3" font-size="11.2" fill="#595959" font-weight="normal" font-family="Liberation Sans" font-style="normal" textLength="42.6" lengthAdjust="spacingAndGlyphs" stroke="#595959" stroke-width="0.28" >Строгий</text>
<text x="858.9" y="107.3" font-size="11.2" fill="#595959" font-weight="normal" font-family="Liberation Sans" font-style="normal" textLength="59.1" lengthAdjust="spacingAndGlyphs" stroke="#595959" stroke-width="0.28" >¶ Без инте...</text>
<text x="926.9" y="107.3" font-size="11.2" fill="#595959" font-weight="normal" font-family="Liberation Sans" font-style="normal" textLength="56.7" lengthAdjust="spacingAndGlyphs" stroke="#595959" stroke-width="0.28" >Заголово...</text>
<text x="994" y="107.3" font-size="11.2" fill="#595959" font-weight="normal" font-family="Liberation Sans" font-style="normal" textLength="57.0" lengthAdjust="spacingAndGlyphs" stroke="#595959" stroke-width="0.28" >Заголово...</text>
<text x="1062" y="107.3" font-size="11.2" fill="#595959" font-weight="normal" font-family="Liberation Sans" font-style="normal" textLength="56.3" lengthAdjust="spacingAndGlyphs" stroke="#595959" stroke-width="0.28" >Заголово...</text>
<text x="873.5" y="136" font-size="11.2" fill="#666666" font-weight="normal" font-family="Liberation Sans" font-style="normal" textLength="29.3" lengthAdjust="spacingAndGlyphs" stroke="#666666" stroke-width="0.28" >Стили</text>
<path d="M1135.5,129.5 H1141.5 V135.5 H1135.5 Z" fill="none" stroke="#8a8a8a" stroke-width="0.8"/><path d="M1137.5,131.5 L1141.5,135.5 M1141.5,132.5 V135.5 H1138.5" fill="none" stroke="#777" stroke-width="1"/>
<g fill="none" stroke="#4d6f91" stroke-width="1.8"><circle cx="1162.5" cy="66" r="3.8"/><path d="M1159.6,69 L1155.5,73"/></g>
<text x="1172" y="71.4" font-size="11.2" fill="#444444" font-weight="normal" font-family="Liberation Sans" font-style="normal" textLength="30.5" lengthAdjust="spacingAndGlyphs" stroke="#444444" stroke-width="0.28" >Найти</text>
<path d="M1213,67 H1218 L1215.5,69.8 Z" fill="#666"/>
<text x="1153" y="89" font-size="9" fill="#8a5a8e" font-weight="normal" font-family="Liberation Sans" font-style="normal" text-anchor="start" stroke="#8a5a8e" stroke-width="0.3" >ab</text>
<text x="1157" y="95.5" font-size="9" fill="#4d7a9a" font-weight="normal" font-family="Liberation Sans" font-style="normal" text-anchor="start" stroke="#4d7a9a" stroke-width="0.3" >ac</text>
<path d="M1154,91 L1155.5,93 L1157,91.5" fill="none" stroke="#4d7a9a" stroke-width="0.9"/>
<text x="1171.3" y="93" font-size="11.2" fill="#444444" font-weight="normal" font-family="Liberation Sans" font-style="normal" textLength="49.3" lengthAdjust="spacingAndGlyphs" stroke="#444444" stroke-width="0.28" >Заменить</text>
<path d="M1157.5,103 V114.5 L1160.2,111.8 L1162.5,116 L1164.2,115.2 L1162,111 H1165.8 Z" fill="#fff" stroke="#666" stroke-width="1"/>
<text x="1172" y="114.5" font-size="11.2" fill="#444444" font-weight="normal" font-family="Liberation Sans" font-style="normal" textLength="48.6" lengthAdjust="spacingAndGlyphs" stroke="#444444" stroke-width="0.28" >Выделить</text>
<path d="M1224,110 H1229 L1226.5,112.8 Z" fill="#666"/>
<text x="1152.3" y="135.5" font-size="11.2" fill="#666666" font-weight="normal" font-family="Liberation Sans" font-style="normal" textLength="81.5" lengthAdjust="spacingAndGlyphs" stroke="#666666" stroke-width="0.28" >Редактирование</text>
<path d="M1263,135 L1267,131 L1271,135" fill="none" stroke="#555" stroke-width="1.5"/>
<rect x="268" y="145" width="108.2" height="10" fill="#c6c6c6" />
<rect x="376.2" y="145" width="584.5" height="10" fill="#ffffff" />
<rect x="960.7" y="145" width="53.5" height="10" fill="#c6c6c6" />
<text x="269.8" y="153.7" font-size="10" fill="#4d4d4d" font-weight="normal" font-family="Liberation Sans" font-style="normal" text-anchor="middle" stroke="#4d4d4d" stroke-width="0.2" >3</text>
<rect x="278.0" y="150.2" width="1.4" height="1.4" fill="#4d4d4d" />
<rect x="287.1" y="148.5" width="1.1" height="4.5" fill="#4d4d4d" />
<rect x="295.7" y="150.2" width="1.4" height="1.4" fill="#4d4d4d" />
<text x="305.3" y="153.7" font-size="10" fill="#4d4d4d" font-weight="normal" font-family="Liberation Sans" font-style="normal" text-anchor="middle" stroke="#4d4d4d" stroke-width="0.2" >2</text>
<rect x="313.5" y="150.2" width="1.4" height="1.4" fill="#4d4d4d" />
<rect x="322.5" y="148.5" width="1.1" height="4.5" fill="#4d4d4d" />
<rect x="331.2" y="150.2" width="1.4" height="1.4" fill="#4d4d4d" />
<text x="340.8" y="153.7" font-size="10" fill="#4d4d4d" font-weight="normal" font-family="Liberation Sans" font-style="normal" text-anchor="middle" stroke="#4d4d4d" stroke-width="0.2" >1</text>
<rect x="348.9" y="150.2" width="1.4" height="1.4" fill="#4d4d4d" />
<rect x="358.0" y="148.5" width="1.1" height="4.5" fill="#4d4d4d" />
<rect x="366.6" y="150.2" width="1.4" height="1.4" fill="#4d4d4d" />
<rect x="384.4" y="150.2" width="1.4" height="1.4" fill="#4d4d4d" />
<rect x="393.4" y="148.5" width="1.1" height="4.5" fill="#4d4d4d" />
<rect x="402.1" y="150.2" width="1.4" height="1.4" fill="#4d4d4d" />
<rect x="419.8" y="150.2" width="1.4" height="1.4" fill="#4d4d4d" />
<rect x="428.9" y="148.5" width="1.1" height="4.5" fill="#4d4d4d" />
<rect x="437.5" y="150.2" width="1.4" height="1.4" fill="#4d4d4d" />
<text x="447.1" y="153.7" font-size="10" fill="#4d4d4d" font-weight="normal" font-family="Liberation Sans" font-style="normal" text-anchor="middle" stroke="#4d4d4d" stroke-width="0.2" >2</text>
<rect x="455.3" y="150.2" width="1.4" height="1.4" fill="#4d4d4d" />
<rect x="464.3" y="148.5" width="1.1" height="4.5" fill="#4d4d4d" />
<rect x="473.0" y="150.2" width="1.4" height="1.4" fill="#4d4d4d" />
<text x="482.6" y="153.7" font-size="10" fill="#4d4d4d" font-weight="normal" font-family="Liberation Sans" font-style="normal" text-anchor="middle" stroke="#4d4d4d" stroke-width="0.2" >3</text>
<rect x="490.7" y="150.2" width="1.4" height="1.4" fill="#4d4d4d" />
<rect x="499.8" y="148.5" width="1.1" height="4.5" fill="#4d4d4d" />
<rect x="508.4" y="150.2" width="1.4" height="1.4" fill="#4d4d4d" />
<text x="518.0" y="153.7" font-size="10" fill="#4d4d4d" font-weight="normal" font-family="Liberation Sans" font-style="normal" text-anchor="middle" stroke="#4d4d4d" stroke-width="0.2" >4</text>
<rect x="526.2" y="150.2" width="1.4" height="1.4" fill="#4d4d4d" />
<rect x="535.2" y="148.5" width="1.1" height="4.5" fill="#4d4d4d" />
<rect x="543.9" y="150.2" width="1.4" height="1.4" fill="#4d4d4d" />
<text x="553.5" y="153.7" font-size="10" fill="#4d4d4d" font-weight="normal" font-family="Liberation Sans" font-style="normal" text-anchor="middle" stroke="#4d4d4d" stroke-width="0.2" >5</text>
<rect x="561.6" y="150.2" width="1.4" height="1.4" fill="#4d4d4d" />
<rect x="570.7" y="148.5" width="1.1" height="4.5" fill="#4d4d4d" />
<rect x="579.3" y="150.2" width="1.4" height="1.4" fill="#4d4d4d" />
<text x="588.9" y="153.7" font-size="10" fill="#4d4d4d" font-weight="normal" font-family="Liberation Sans" font-style="normal" text-anchor="middle" stroke="#4d4d4d" stroke-width="0.2" >6</text>
<rect x="597.1" y="150.2" width="1.4" height="1.4" fill="#4d4d4d" />
<rect x="606.1" y="148.5" width="1.1" height="4.5" fill="#4d4d4d" />
<rect x="614.8" y="150.2" width="1.4" height="1.4" fill="#4d4d4d" />
<text x="624.4" y="153.7" font-size="10" fill="#4d4d4d" font-weight="normal" font-family="Liberation Sans" font-style="normal" text-anchor="middle" stroke="#4d4d4d" stroke-width="0.2" >7</text>
<rect x="632.5" y="150.2" width="1.4" height="1.4" fill="#4d4d4d" />
<rect x="641.6" y="148.5" width="1.1" height="4.5" fill="#4d4d4d" />
<rect x="650.2" y="150.2" width="1.4" height="1.4" fill="#4d4d4d" />
<text x="659.8" y="153.7" font-size="10" fill="#4d4d4d" font-weight="normal" font-family="Liberation Sans" font-style="normal" text-anchor="middle" stroke="#4d4d4d" stroke-width="0.2" >8</text>
<rect x="668.0" y="150.2" width="1.4" height="1.4" fill="#4d4d4d" />
<rect x="677.0" y="148.5" width="1.1" height="4.5" fill="#4d4d4d" />
<rect x="685.7" y="150.2" width="1.4" height="1.4" fill="#4d4d4d" />
<text x="695.2" y="153.7" font-size="10" fill="#4d4d4d" font-weight="normal" font-family="Liberation Sans" font-style="normal" text-anchor="middle" stroke="#4d4d4d" stroke-width="0.2" >9</text>
<rect x="703.4" y="150.2" width="1.4" height="1.4" fill="#4d4d4d" />
<rect x="712.5" y="148.5" width="1.1" height="4.5" fill="#4d4d4d" />
<rect x="721.1" y="150.2" width="1.4" height="1.4" fill="#4d4d4d" />
<text x="730.7" y="153.7" font-size="10" fill="#4d4d4d" font-weight="normal" font-family="Liberation Sans" font-style="normal" text-anchor="middle" stroke="#4d4d4d" stroke-width="0.2" >10</text>
<rect x="738.9" y="150.2" width="1.4" height="1.4" fill="#4d4d4d" />
<rect x="747.9" y="148.5" width="1.1" height="4.5" fill="#4d4d4d" />
<rect x="756.6" y="150.2" width="1.4" height="1.4" fill="#4d4d4d" />
<text x="766.2" y="153.7" font-size="10" fill="#4d4d4d" font-weight="normal" font-family="Liberation Sans" font-style="normal" text-anchor="middle" stroke="#4d4d4d" stroke-width="0.2" >11</text>
<rect x="774.3" y="150.2" width="1.4" height="1.4" fill="#4d4d4d" />
<rect x="783.4" y="148.5" width="1.1" height="4.5" fill="#4d4d4d" />
<rect x="792.0" y="150.2" width="1.4" height="1.4" fill="#4d4d4d" />
<text x="801.6" y="153.7" font-size="10" fill="#4d4d4d" font-weight="normal" font-family="Liberation Sans" font-style="normal" text-anchor="middle" stroke="#4d4d4d" stroke-width="0.2" >12</text>
<rect x="809.8" y="150.2" width="1.4" height="1.4" fill="#4d4d4d" />
<rect x="818.8" y="148.5" width="1.1" height="4.5" fill="#4d4d4d" />
<rect x="827.5" y="150.2" width="1.4" height="1.4" fill="#4d4d4d" />
<text x="837.0" y="153.7" font-size="10" fill="#4d4d4d" font-weight="normal" font-family="Liberation Sans" font-style="normal" text-anchor="middle" stroke="#4d4d4d" stroke-width="0.2" >13</text>
<rect x="845.2" y="150.2" width="1.4" height="1.4" fill="#4d4d4d" />
<rect x="854.3" y="148.5" width="1.1" height="4.5" fill="#4d4d4d" />
<rect x="862.9" y="150.2" width="1.4" height="1.4" fill="#4d4d4d" />
<text x="872.5" y="153.7" font-size="10" fill="#4d4d4d" font-weight="normal" font-family="Liberation Sans" font-style="normal" text-anchor="middle" stroke="#4d4d4d" stroke-width="0.2" >14</text>
<rect x="880.7" y="150.2" width="1.4" height="1.4" fill="#4d4d4d" />
<rect x="889.7" y="148.5" width="1.1" height="4.5" fill="#4d4d4d" />
<rect x="898.4" y="150.2" width="1.4" height="1.4" fill="#4d4d4d" />
<text x="908.0" y="153.7" font-size="10" fill="#4d4d4d" font-weight="normal" font-family="Liberation Sans" font-style="normal" text-anchor="middle" stroke="#4d4d4d" stroke-width="0.2" >15</text>
<rect x="916.1" y="150.2" width="1.4" height="1.4" fill="#4d4d4d" />
<rect x="925.2" y="148.5" width="1.1" height="4.5" fill="#4d4d4d" />
<rect x="933.8" y="150.2" width="1.4" height="1.4" fill="#4d4d4d" />
<text x="943.4" y="153.7" font-size="10" fill="#4d4d4d" font-weight="normal" font-family="Liberation Sans" font-style="normal" text-anchor="middle" stroke="#4d4d4d" stroke-width="0.2" >16</text>
<rect x="951.6" y="150.2" width="1.4" height="1.4" fill="#4d4d4d" />
<rect x="960.6" y="148.5" width="1.1" height="4.5" fill="#4d4d4d" />
<rect x="969.3" y="150.2" width="1.4" height="1.4" fill="#4d4d4d" />
<text x="978.9" y="153.7" font-size="10" fill="#4d4d4d" font-weight="normal" font-family="Liberation Sans" font-style="normal" text-anchor="middle" stroke="#4d4d4d" stroke-width="0.2" >17</text>
<rect x="987.0" y="150.2" width="1.4" height="1.4" fill="#4d4d4d" />
<rect x="996.1" y="148.5" width="1.1" height="4.5" fill="#4d4d4d" />
<rect x="1004.7" y="150.2" width="1.4" height="1.4" fill="#4d4d4d" />
<path d="M406.8,142.8 H415.2 L411,149.8 Z M411,150.2 L406.8,156 H415.2 Z" fill="#fff" stroke="#8a8a8a" stroke-width="0.9"/><rect x="406.8" y="156.3" width="8.4" height="6" fill="#fff" stroke="#8a8a8a" stroke-width="0.9"/>
<path d="M936,156 L940.2,150.5 L944.4,156 V159 H936 Z" fill="#fff" stroke="#8a8a8a" stroke-width="0.9"/>
<rect x="3.5" y="142.5" width="14" height="16" fill="#f7f7f7" stroke="#dcdcdc"/>
<path d="M8,148 V153.5 H13" fill="none" stroke="#333" stroke-width="1.5"/>
<rect x="5" y="161" width="10.5" height="202.5" fill="#ffffff" />
<rect x="5" y="363.5" width="10.5" height="74.5" fill="#c6c6c6" />
<g clip-path="url(#vrclip)"><text x="0" y="0" font-size="9.3" fill="#4d4d4d" stroke="#4d4d4d" stroke-width="0.2" font-family="Liberation Sans" text-anchor="middle" transform="translate(14.6,163.3) rotate(-90)">20</text></g>
<rect x="10.6" y="170.7" width="1.4" height="1.4" fill="#4d4d4d" />
<rect x="9.2" y="179.8" width="4.5" height="1.1" fill="#4d4d4d" />
<rect x="10.6" y="188.4" width="1.4" height="1.4" fill="#4d4d4d" />
<g clip-path="url(#vrclip)"><text x="0" y="0" font-size="9.3" fill="#4d4d4d" stroke="#4d4d4d" stroke-width="0.2" font-family="Liberation Sans" text-anchor="middle" transform="translate(14.6,198.8) rotate(-90)">21</text></g>
<rect x="10.6" y="206.2" width="1.4" height="1.4" fill="#4d4d4d" />
<rect x="9.2" y="215.2" width="4.5" height="1.1" fill="#4d4d4d" />
<rect x="10.6" y="223.9" width="1.4" height="1.4" fill="#4d4d4d" />
<g clip-path="url(#vrclip)"><text x="0" y="0" font-size="9.3" fill="#4d4d4d" stroke="#4d4d4d" stroke-width="0.2" font-family="Liberation Sans" text-anchor="middle" transform="translate(14.6,234.3) rotate(-90)">22</text></g>
<rect x="10.6" y="241.6" width="1.4" height="1.4" fill="#4d4d4d" />
<rect x="9.2" y="250.7" width="4.5" height="1.1" fill="#4d4d4d" />
<rect x="10.6" y="259.3" width="1.4" height="1.4" fill="#4d4d4d" />
<g clip-path="url(#vrclip)"><text x="0" y="0" font-size="9.3" fill="#4d4d4d" stroke="#4d4d4d" stroke-width="0.2" font-family="Liberation Sans" text-anchor="middle" transform="translate(14.6,269.7) rotate(-90)">23</text></g>
<rect x="10.6" y="277.1" width="1.4" height="1.4" fill="#4d4d4d" />
<rect x="9.2" y="286.1" width="4.5" height="1.1" fill="#4d4d4d" />
<rect x="10.6" y="294.8" width="1.4" height="1.4" fill="#4d4d4d" />
<g clip-path="url(#vrclip)"><text x="0" y="0" font-size="9.3" fill="#4d4d4d" stroke="#4d4d4d" stroke-width="0.2" font-family="Liberation Sans" text-anchor="middle" transform="translate(14.6,305.2) rotate(-90)">24</text></g>
<rect x="10.6" y="312.5" width="1.4" height="1.4" fill="#4d4d4d" />
<rect x="9.2" y="321.6" width="4.5" height="1.1" fill="#4d4d4d" />
<rect x="10.6" y="330.2" width="1.4" height="1.4" fill="#4d4d4d" />
<g clip-path="url(#vrclip)"><text x="0" y="0" font-size="9.3" fill="#4d4d4d" stroke="#4d4d4d" stroke-width="0.2" font-family="Liberation Sans" text-anchor="middle" transform="translate(14.6,340.6) rotate(-90)">25</text></g>
<rect x="10.6" y="348.0" width="1.4" height="1.4" fill="#4d4d4d" />
<rect x="9.2" y="357.0" width="4.5" height="1.1" fill="#4d4d4d" />
<rect x="10.6" y="365.7" width="1.4" height="1.4" fill="#4d4d4d" />
<g clip-path="url(#vrclip)"><text x="0" y="0" font-size="9.3" fill="#4d4d4d" stroke="#4d4d4d" stroke-width="0.2" font-family="Liberation Sans" text-anchor="middle" transform="translate(14.6,376.1) rotate(-90)">26</text></g>
<rect x="10.6" y="383.4" width="1.4" height="1.4" fill="#4d4d4d" />
<rect x="9.2" y="392.5" width="4.5" height="1.1" fill="#4d4d4d" />
<rect x="10.6" y="401.1" width="1.4" height="1.4" fill="#4d4d4d" />
<g clip-path="url(#vrclip)"><text x="0" y="0" font-size="9.3" fill="#4d4d4d" stroke="#4d4d4d" stroke-width="0.2" font-family="Liberation Sans" text-anchor="middle" transform="translate(14.6,411.5) rotate(-90)">27</text></g>
<rect x="10.6" y="418.9" width="1.4" height="1.4" fill="#4d4d4d" />
<rect x="9.2" y="427.9" width="4.5" height="1.1" fill="#4d4d4d" />
<rect x="1264" y="141" width="16" height="520" fill="#dcdcdc" />
<rect x="1265.5" y="145.5" width="12.5" height="11.5" fill="#fff" stroke="#c3c3c3"/><path d="M1268.5,153 H1275 L1271.75,149.5 Z" fill="#555"/>
<rect x="1265.5" y="471.5" width="13" height="14.5" fill="#fff" stroke="#a7a7a7"/>
<rect x="1265.5" y="647.5" width="12.5" height="11.5" fill="#fff" stroke="#c3c3c3"/><path d="M1268.5,651 H1275 L1271.75,654.5 Z" fill="#555"/>
<text x="944" y="609.1" font-size="17" fill="#b3b3b3" font-weight="normal" font-family="Liberation Sans" font-style="normal" textLength="172.5" lengthAdjust="spacingAndGlyphs" stroke="#b3b3b3" stroke-width="0.1" >Активация Windows</text>
<text x="944" y="628.6" font-size="12.5" fill="#b3b3b3" font-weight="normal" font-family="Liberation Sans" font-style="normal" textLength="282.5" lengthAdjust="spacingAndGlyphs" stroke="#b3b3b3" stroke-width="0.1" >Чтобы активировать Windows, перейдите в</text>
<text x="944" y="647.2" font-size="12.5" fill="#b3b3b3" font-weight="normal" font-family="Liberation Sans" font-style="normal" textLength="137.5" lengthAdjust="spacingAndGlyphs" stroke="#b3b3b3" stroke-width="0.1" >раздел &quot;Параметры&quot;.</text>
<rect x="0" y="662" width="1280" height="21" fill="#f1f1f1" />
<rect x="0" y="662" width="1280" height="1" fill="#d2d2d2" />
<rect x="0" y="682" width="1280" height="1" fill="#fafafa" />
<text x="7" y="676.1" font-size="11.2" fill="#4a4a4a" font-weight="normal" font-family="Liberation Sans" font-style="normal" textLength="90.5" lengthAdjust="spacingAndGlyphs" stroke="#4a4a4a" stroke-width="0.28" >Страница 45 из 68</text>
<text x="116" y="676.1" font-size="11.2" fill="#4a4a4a" font-weight="normal" font-family="Liberation Sans" font-style="normal" textLength="88.0" lengthAdjust="spacingAndGlyphs" stroke="#4a4a4a" stroke-width="0.28" >Число слов: 13905</text>
<g fill="none" stroke="#666" stroke-width="1"><path d="M223,668.5 H229 V677.5 H223 Z M229,668.5 L232,670 V677.5 L229,677.5"/><path d="M232.5,669 L236,673 M236,669 L232.5,673" stroke-width="0.9"/></g>
<text x="252.5" y="676.1" font-size="11.2" fill="#4a4a4a" font-weight="normal" font-family="Liberation Sans" font-style="normal" textLength="38.3" lengthAdjust="spacingAndGlyphs" stroke="#4a4a4a" stroke-width="0.28" >русский</text>
<g fill="none" stroke="#777" stroke-width="1"><path d="M1017.5,666.5 H1023.5 V676.5 H1017.5 Z M1023.5,666.5 H1029.5 V676.5 H1023.5 Z"/><path d="M1019,669 H1022 M1019,671 H1022 M1019,673 H1022 M1025,669 H1028 M1025,671 H1028 M1025,673 H1028" stroke-width="0.8"/></g>
<rect x="1042" y="663" width="35" height="19" fill="#d0d0d0" />
<g fill="none" stroke="#666" stroke-width="1"><rect x="1053.5" y="665.5" width="13" height="11"/><path d="M1056,668.5 H1064 M1056,670.5 H1064 M1056,672.5 H1064 M1056,674.5 H1064" stroke-width="0.9"/></g>
<g fill="none" stroke="#777" stroke-width="1"><path d="M1088.5,665.5 H1097.5 V675 M1088.5,665.5 V677.5 H1095 M1090.5,668.5 H1095.5 M1090.5,670.5 H1095.5 M1090.5,672.5 H1093"/><circle cx="1098.5" cy="675" r="3.2" fill="#f1f1f1"/><path d="M1096.5,674 H1100.5 M1098.5,672 V678"/></g>
<rect x="1118" y="671.3" width="5.5" height="1.3" fill="#555" />
<rect x="1127" y="671" width="94" height="1" fill="#a0a0a0" />
<rect x="1171.7" y="666.3" width="4.3" height="10.5" fill="#666" />
<rect x="1224.5" y="670.8" width="7.5" height="1.4" fill="#555" />
<rect x="1227.5" y="667.5" width="1.4" height="8" fill="#555" />
<text x="1247.2" y="676.1" font-size="11.2" fill="#4a4a4a" font-weight="normal" font-family="Liberation Sans" font-style="normal" textLength="24.3" lengthAdjust="spacingAndGlyphs" stroke="#4a4a4a" stroke-width="0.28" >100%</text>
<rect x="0" y="683" width="1280" height="37" fill="#22252f" />
<g fill="#fff"><path d="M14.5,695.2 L21.5,694.2 V700.6 H14.5 Z M22.5,694 L30,693 V700.6 H22.5 Z M14.5,701.6 H21.5 V708 L14.5,707 Z M22.5,701.6 H30 V708.5 L22.5,707.5 Z"/></g>
<g fill="none" stroke="#fff" stroke-width="1.4"><circle cx="70" cy="699.5" r="5.2"/><path d="M66.3,703.2 L60.5,709"/></g>
<g fill="none" stroke="#fff" stroke-width="1.3"><rect x="105.5" y="697" width="10" height="9"/><path d="M105,694.8 H116 M105,708.3 H116 M118.8,694 V709"/></g>
<path d="M170,704 H156 Q156.5,708.5 162,708.8 Q166,709 169,707 V710.5 Q165.5,712 161.5,711.8 Q151,711 150.5,702 Q150.5,693 160,692.5 Q170,692.5 170,702.5 Z M157,700 H164.5 Q164,696 160.8,696 Q157.5,696 157,700 Z" fill="#1a7fd8"/>
<path d="M196,692.6 H203 L205,694.6 H216 V709.4 H196 Z" fill="#e9c866"/><path d="M196,696.5 H216 V709.4 H196 Z" fill="#f9de8e"/><path d="M200,702.2 H212 V709.4 H200 Z" fill="#4aa0dc"/><rect x="203" y="705.5" width="6" height="2.5" fill="#a8d4f2"/>
<rect x="187.5" y="717.8" width="37" height="2.2" fill="#76b9ed" />
<path d="M246.5,696 Q246.5,690.5 251.3,690.5 Q256,690.5 256,696" fill="none" stroke="#fff" stroke-width="1.3"/><rect x="240.5" y="695.5" width="21.5" height="16" fill="#fff"/>
<rect x="246.5" y="698.5" width="4.3" height="4.3" fill="#f25022" />
<rect x="251.5" y="698.5" width="4.3" height="4.3" fill="#7fba00" />
<rect x="246.5" y="703.5" width="4.3" height="4.3" fill="#00a4ef" />
<rect x="251.5" y="703.5" width="4.3" height="4.3" fill="#ffb900" />
<path d="M287,697 L298,691.8 L309.3,697 V709.8 H287 Z" fill="#fff"/><path d="M287.5,697.5 L309,697.5 L301,700.5 L304,705 L297,700.8 Z" fill="#22252f"/>
<circle cx="343.8" cy="701" r="10.6" fill="#db4437"/>
<path d="M343.8,701 L334.6,706.3 A10.6,10.6 0 0 0 343.8,711.6 Z" fill="#0f9d58"/><path d="M334.6,695.7 A10.6,10.6 0 0 0 338.5,710.2 L343.8,701 Z" fill="#0f9d58"/>
<path d="M343.8,701 L352.9,695.7 A10.6,10.6 0 0 1 343.8,711.6 L338.5,710.2 Z" fill="#f4c20d"/>
<circle cx="343.8" cy="701" r="4.9" fill="#fff"/><circle cx="343.8" cy="701" r="3.8" fill="#4285f4"/>
<rect x="325" y="717.8" width="37.5" height="2.2" fill="#76b9ed" />
<rect x="367.2" y="683" width="45" height="37" fill="#42454f" />
<rect x="367.2" y="717.8" width="45" height="2.2" fill="#8fc3f0" />
<rect x="391.8" y="692.8" width="8" height="16.4" fill="#f2f4f8"/>
<rect x="393" y="695" width="5.5" height="7" fill="#b9c2d3"/><rect x="393" y="703.8" width="5.5" height="1" fill="#3b3f4a"/><rect x="393" y="706" width="5.5" height="1" fill="#3b3f4a"/>
<rect x="378.8" y="691.5" width="12.5" height="18.5" rx="3" fill="#2c5398"/>
<text x="385.2" y="704.3" font-size="9.5" fill="#fff" font-weight="bold" font-family="Liberation Sans" font-style="normal" text-anchor="middle" stroke="#fff" stroke-width="0.3" >W</text>
<g fill="none" stroke="#fff" stroke-width="1.2"><circle cx="1025.5" cy="697" r="2.6"/><path d="M1021,704 Q1021.5,700.8 1025.5,700.5 Q1029.5,700.8 1030,704"/><circle cx="1019.5" cy="701.5" r="2.3"/><path d="M1015.5,708 Q1016,705 1019.5,704.8 Q1023,705 1023.5,708"/></g>
<path d="M1050.5,704.5 L1056,698.8 L1061.5,704.5" fill="none" stroke="#fff" stroke-width="1.4"/>
<g fill="none" stroke="#fff" stroke-width="1.2"><path d="M1074,707 A12,12 0 0 1 1085.5,695.5 M1076.8,707 A9,9 0 0 1 1085.5,698.5 M1079.6,707 A6,6 0 0 1 1085.5,701.5"/></g><circle cx="1084" cy="705.5" r="1.8" fill="#fff"/>
<rect x="1094.5" y="698.5" width="12.5" height="7" fill="none" stroke="#fff" stroke-width="1.2"/><rect x="1096.2" y="700.2" width="6" height="3.6" fill="#fff"/><rect x="1107" y="700.7" width="1.5" height="2.6" fill="#fff"/>
<path d="M1116,699 H1119 L1123,695.5 V708.5 L1119,705 H1116 Z" fill="none" stroke="#fff" stroke-width="1.1"/><path d="M1125.5,699 Q1127.5,702 1125.5,705 M1128,696.5 Q1131.5,702 1128,707.5" fill="none" stroke="#fff" stroke-width="1.1"/>
<text x="1141" y="705.2" font-size="11.8" fill="#ffffff" font-weight="normal" font-family="Liberation Sans" font-style="normal" textLength="21.0" lengthAdjust="spacingAndGlyphs" stroke="#ffffff" stroke-width="0.28" >РУС</text>
<text x="1186" y="696.4" font-size="11.8" fill="#ffffff" font-weight="normal" font-family="Liberation Sans" font-style="normal" textLength="26.0" lengthAdjust="spacingAndGlyphs" stroke="#ffffff" stroke-width="0.28" >16:05</text>
<text x="1174.6" y="713.3" font-size="11.8" fill="#ffffff" font-weight="normal" font-family="Liberation Sans" font-style="normal" textLength="50.4" lengthAdjust="spacingAndGlyphs" stroke="#ffffff" stroke-width="0.28" >13.04.2019</text>
<path d="M1240.5,693.5 H1258 V705.5 H1247 L1243.5,709 V705.5 H1240.5 Z" fill="#fff"/><g stroke="#22252f" stroke-width="1"><path d="M1243.5,697 H1255 M1243.5,699.5 H1255 M1243.5,702 H1251"/></g>
<circle cx="1256" cy="708.3" r="7.3" fill="#22252f" stroke="#c8c8c8" stroke-width="1"/>
<text x="1256" y="712.5" font-size="11" fill="#fff" font-weight="bold" font-family="Liberation Sans" font-style="normal" text-anchor="middle" stroke="#fff" stroke-width="0.3" >6</text>
</svg>
</body></html>
